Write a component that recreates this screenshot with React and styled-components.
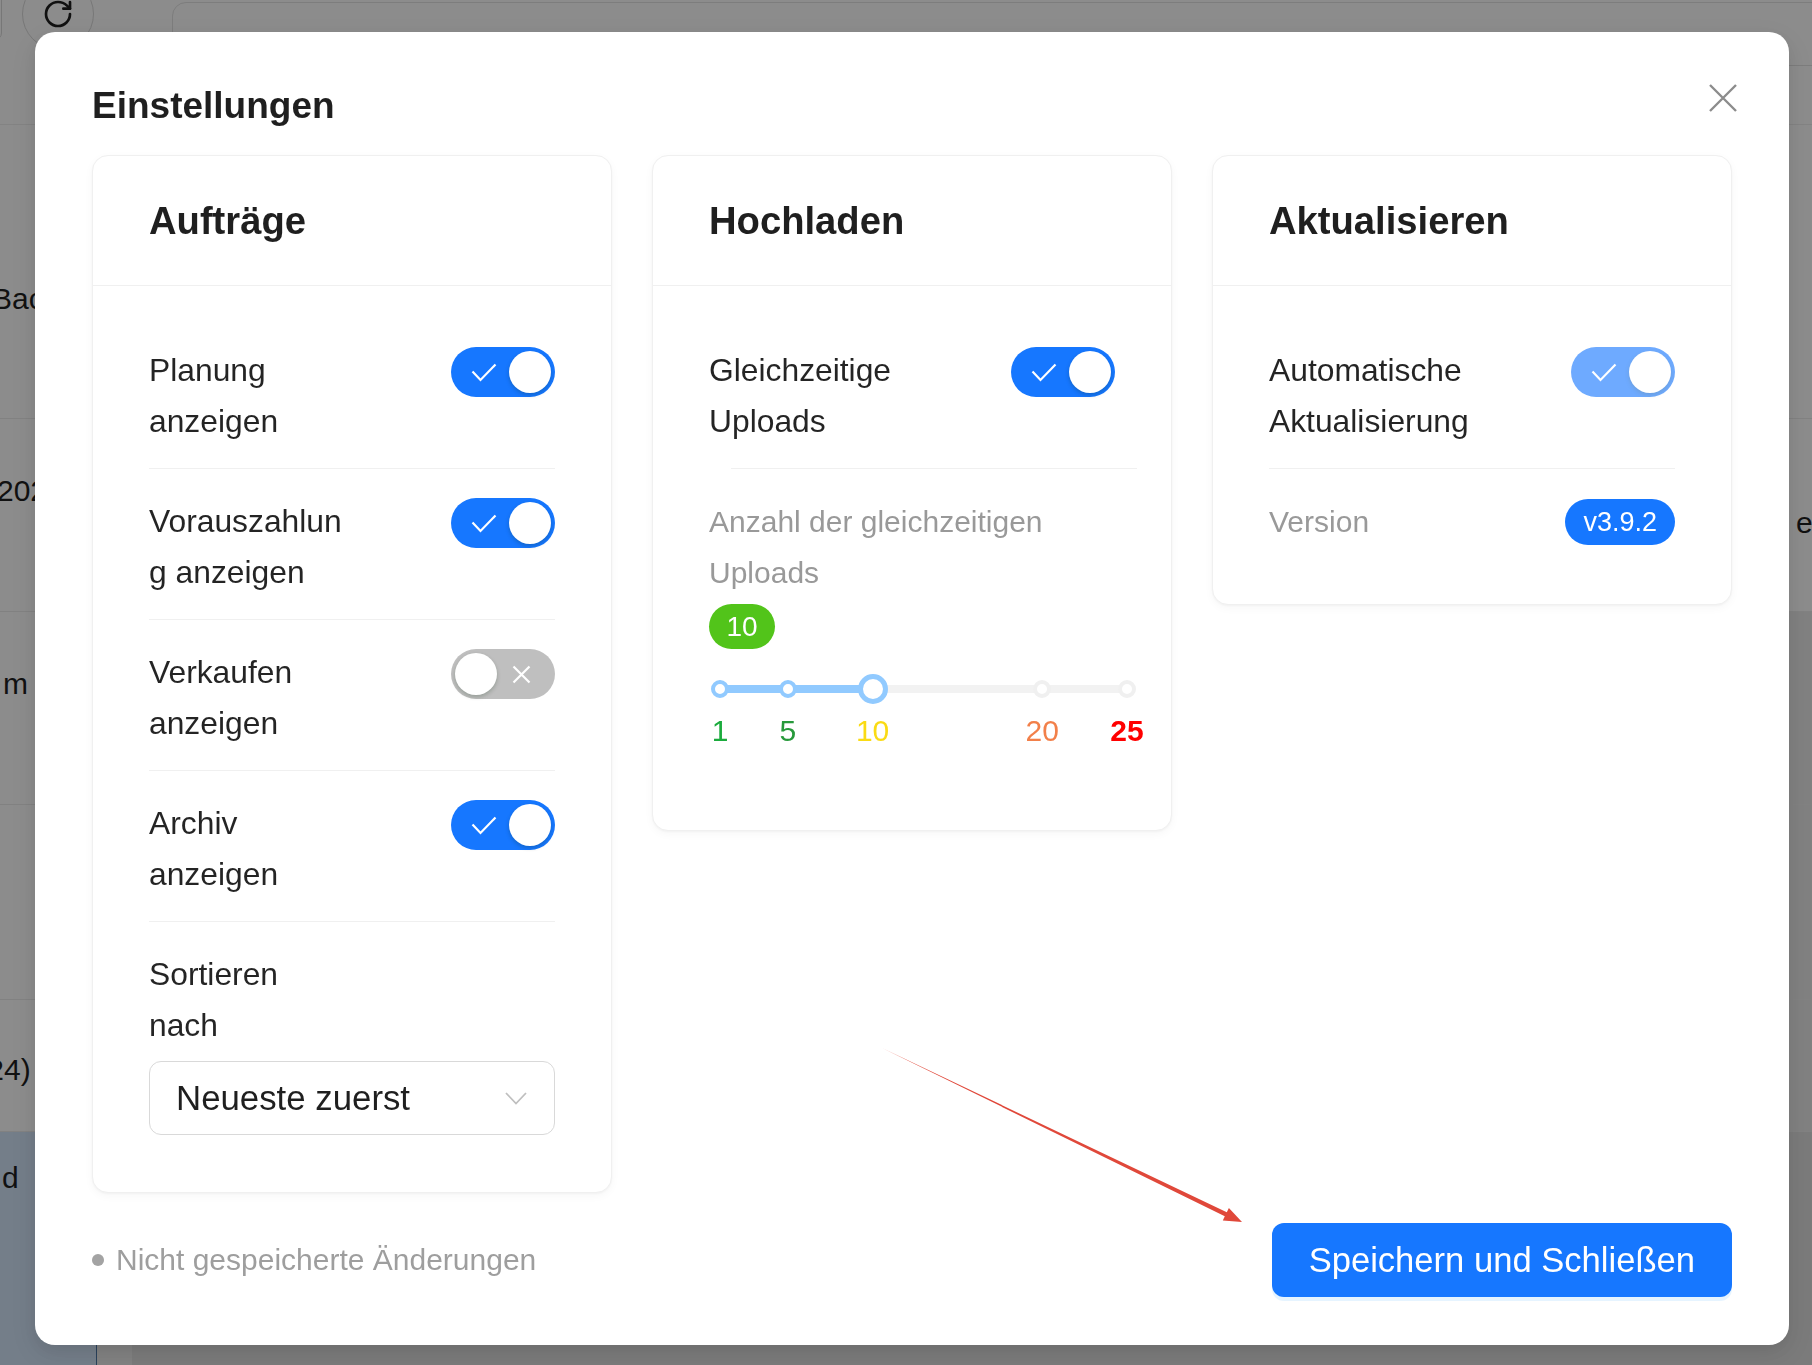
import React from 'react';
import styled, { createGlobalStyle } from 'styled-components';
import { RotateCw } from 'lucide-react';

const GlobalStyle = createGlobalStyle`
  html, body { margin: 0; padding: 0; background: #fff; overflow: hidden; }
  body { font-family: "Open Sans", "Noto Sans", sans-serif; }
  * { box-sizing: border-box; }
`;

/* ---------- background app (dimmed behind the modal) ---------- */
const Page = styled.div`
  position: relative;
  width: 1812px;
  height: 1365px;
  overflow: hidden;
  background: #fff;
  font-family: "Liberation Sans", Arial, sans-serif;
  color: #1f1f1f;
`;

const TopBar = styled.div`
  height: 125px;
  display: flex;
  align-items: flex-start;
  border-bottom: 1px solid #eeeeee;
`;

const EdgeButton = styled.div`
  width: 14px;
  height: 70px;
  margin: -30px 0 0 -12px;
  border: 1px solid #d9d9d9;
  border-radius: 10px;
`;

const CircleButton = styled.div`
  width: 72px;
  height: 72px;
  margin: -22px 0 0 20px;
  border-radius: 50%;
  border: 1px solid #d9d9d9;
  display: flex;
  align-items: center;
  justify-content: center;
  color: #1f1f1f;
`;

const SearchBox = styled.div`
  flex: 1;
  height: 64px;
  margin: 2px -30px 0 78px;
  border: 1px solid #e3e3e3;
  border-radius: 14px;
`;

const BgRow = styled.div`
  display: flex;
  height: ${p => p.$h}px;
  border-bottom: 1px solid #ececec;
  background: ${p => p.$bg || '#fff'};
`;

const BgCell = styled.div`
  width: ${p => (p.$w ? `${p.$w}px` : 'auto')};
  flex: ${p => (p.$w ? 'none' : 1)};
  padding-top: ${p => p.$ty || 0}px;
  background: ${p => p.$bg || 'transparent'};
  border-right: ${p => (p.$line ? `1px solid ${p.$line}` : 'none')};
  overflow: hidden;
  white-space: nowrap;
  font-size: 30px;
  line-height: 36px;
`;

const BgText = styled.span`
  display: inline-block;
  margin-left: ${p => p.$x || 0}px;
`;

/* ---------- modal ---------- */
const Overlay = styled.div`
  position: fixed;
  inset: 0;
  background: rgba(0, 0, 0, 0.45);
  padding: 32px 0 0 35px;
  display: flex;
  align-items: flex-start;
`;

const Modal = styled.div`
  width: 1754px;
  background: #fff;
  border-radius: 20px;
  padding: 48px 57px 48px;
  box-shadow: 0 6px 16px rgba(0, 0, 0, 0.08), 0 9px 28px 8px rgba(0, 0, 0, 0.05);
`;

const Header = styled.div`
  display: flex;
  justify-content: space-between;
  align-items: flex-start;
  margin-bottom: 23px;
`;

const Title = styled.h2`
  margin: 0;
  font-weight: 600;
  font-size: 37px;
  line-height: 52px;
  color: rgba(0, 0, 0, 0.88);
`;

const CloseButton = styled.button`
  width: 30px;
  height: 30px;
  margin: 3px -6px 0 0;
  padding: 0;
  border: 0;
  background: none;
  color: #8c8c8c;
  display: flex;
  cursor: pointer;
`;

const Cards = styled.div`
  display: grid;
  grid-template-columns: repeat(3, 520px);
  gap: 40px;
  align-items: start;
`;

const Card = styled.section`
  background: #fff;
  border: 1px solid #f0f0f0;
  border-radius: 16px;
  box-shadow: 0 1px 2px rgba(0, 0, 0, 0.03), 0 3px 10px rgba(0, 0, 0, 0.035);
`;

const CardHead = styled.div`
  height: 130px;
  padding: 0 56px;
  display: flex;
  align-items: center;
  border-bottom: 1px solid #f0f0f0;
`;

const CardTitle = styled.h3`
  margin: 0;
  font-weight: 600;
  font-size: 38.2px;
  line-height: 52px;
  color: rgba(0, 0, 0, 0.88);
`;

const CardBody = styled.div`
  padding: 32px 56px 36px;
`;

const Row = styled.div`
  display: flex;
  flex-direction: ${p => (p.$stack ? 'column' : 'row')};
  justify-content: space-between;
  align-items: ${p => (p.$stack ? 'stretch' : p.$center ? 'center' : 'flex-start')};
  gap: ${p => (p.$stack ? 10 : 16)}px;
  padding: 27px 0 21px;
  border-bottom: ${p => (p.$divider ? '1px solid #f0f0f0' : 'none')};
`;

const Divider = styled.div`
  height: 1px;
  background: #f0f0f0;
  margin: 0 ${p => -(p.$shift || 0)}px 0 ${p => p.$shift || 0}px;
`;

const Label = styled.div`
  font-size: 31.8px;
  line-height: 51px;
  color: rgba(0, 0, 0, 0.86);
`;

const Hint = styled.div`
  font-family: "Liberation Sans", Arial, sans-serif;
  font-size: 30px;
  line-height: 51px;
  color: #999999;
`;

/* switch */
const SwitchTrack = styled.button`
  position: relative;
  flex-shrink: 0;
  width: 104px;
  height: 50px;
  margin-top: 2px;
  padding: 0;
  border: 0;
  border-radius: 25px;
  background: ${p => (p.$checked ? '#1677ff' : 'rgba(0, 0, 0, 0.25)')};
  opacity: ${p => (p.$disabled ? 0.62 : 1)};
  cursor: pointer;
`;

const Knob = styled.span`
  position: absolute;
  top: 4px;
  left: ${p => (p.$checked ? 58 : 4)}px;
  width: 42px;
  height: 42px;
  border-radius: 50%;
  background: #fff;
  box-shadow: 0 2px 4px rgba(0, 35, 11, 0.22);
`;

const SwitchIcon = styled.span`
  position: absolute;
  top: 0;
  bottom: 0;
  width: 54px;
  ${p => (p.$checked ? 'left: 6px;' : 'right: 7px;')}
  display: flex;
  align-items: center;
  justify-content: center;
  color: #fff;
`;

const Switch = ({ checked, disabled }) => (
  <SwitchTrack $checked={checked} $disabled={disabled} aria-pressed={checked}>
    <SwitchIcon $checked={checked}>
      {checked ? (
        <svg width="26" height="19" viewBox="0 0 26 19" fill="none">
          <polyline points="1.5,8.5 9.5,17 24.5,1.5" stroke="currentColor" strokeWidth="2.2" />
        </svg>
      ) : (
        <svg width="19" height="19" viewBox="0 0 19 19" fill="none">
          <path d="M1.5 1.5 L17.5 17.5 M17.5 1.5 L1.5 17.5" stroke="currentColor" strokeWidth="2.2" />
        </svg>
      )}
    </SwitchIcon>
    <Knob $checked={checked} />
  </SwitchTrack>
);

/* select */
const SelectBox = styled.div`
  height: 74px;
  padding: 0 27px 0 26px;
  border: 1px solid #d9d9d9;
  border-radius: 12px;
  display: flex;
  align-items: center;
  justify-content: space-between;
  font-size: 34.8px;
  color: rgba(0, 0, 0, 0.88);
`;

/* slider */
const SliderSection = styled.div`
  display: flex;
  flex-direction: column;
  align-items: flex-start;
  padding: 27px 0 21px;
`;

const ValueBadge = styled.span`
  margin-top: 6px;
  height: 45px;
  min-width: 66px;
  padding: 0 16px;
  border-radius: 23px;
  background: #52c41a;
  color: #fff;
  font-size: 28px;
  line-height: 45px;
  text-align: center;
`;

const SliderBox = styled.div`
  position: relative;
  align-self: stretch;
  height: 124px;
  margin: 0 -12px 0 11px;
`;

const Rail = styled.div`
  position: absolute;
  left: 0;
  right: 0;
  top: 36px;
  height: 8px;
  border-radius: 4px;
  background: #f2f2f2;
`;

const Track = styled.div`
  position: absolute;
  left: 0;
  top: 36px;
  height: 8px;
  border-radius: 4px;
  background: #91caff;
`;

const MarkDot = styled.span`
  position: absolute;
  top: 31px;
  width: 18px;
  height: 18px;
  margin-left: -9px;
  border-radius: 50%;
  background: #fff;
  border: 4px solid ${p => (p.$active ? '#91caff' : '#f0f0f0')};
`;

const Handle = styled.span`
  position: absolute;
  top: 25px;
  width: 30px;
  height: 30px;
  margin-left: -15px;
  border-radius: 50%;
  background: #fff;
  border: 5px solid #91caff;
`;

const MarkLabel = styled.span`
  position: absolute;
  top: 62px;
  transform: translateX(-50%);
  font-size: 30px;
  line-height: 40px;
  font-weight: ${p => (p.$bold ? 700 : 400)};
  color: ${p => p.$color};
`;

const marks = [
  { v: 1, color: '#1bab3d' },
  { v: 5, color: '#27993b' },
  { v: 10, color: '#fadb14' },
  { v: 20, color: '#f2804a' },
  { v: 25, color: '#ff0000', bold: true },
];

const Slider = ({ value, min, max }) => {
  const pct = v => ((v - min) / (max - min)) * 100;
  return (
    <SliderBox>
      <Rail />
      <Track style={{ width: `${pct(value)}%` }} />
      {marks.map(m => (
        <MarkDot key={`d${m.v}`} $active={m.v <= value} style={{ left: `${pct(m.v)}%` }} />
      ))}
      <Handle style={{ left: `${pct(value)}%` }} />
      {marks.map(m => (
        <MarkLabel key={`l${m.v}`} $color={m.color} $bold={m.bold} style={{ left: `${pct(m.v)}%` }}>
          {m.v}
        </MarkLabel>
      ))}
    </SliderBox>
  );
};

const VersionBadge = styled.span`
  height: 46px;
  padding: 0 18px;
  border-radius: 23px;
  background: #1677ff;
  color: #fff;
  font-family: "Liberation Sans", Arial, sans-serif;
  font-size: 27px;
  line-height: 46px;
`;

/* footer */
const Footer = styled.div`
  margin-top: 30px;
  display: flex;
  justify-content: space-between;
  align-items: center;
`;

const Status = styled.div`
  display: flex;
  align-items: center;
  gap: 12px;
  font-family: "Liberation Sans", Arial, sans-serif;
  font-size: 30px;
  line-height: 40px;
  color: #9e9e9e;
`;

const StatusDot = styled.span`
  width: 12px;
  height: 12px;
  border-radius: 50%;
  background: #a3a3a3;
`;

const PrimaryButton = styled.button`
  height: 74px;
  padding: 0 37px;
  border: 0;
  border-radius: 12px;
  background: #1677ff;
  color: #fff;
  font-family: "Liberation Sans", Arial, sans-serif;
  font-size: 34.6px;
  box-shadow: 0 4px 0 rgba(5, 145, 255, 0.1);
  cursor: pointer;
`;

const ArrowMark = styled.svg`
  position: absolute;
  left: 870px;
  top: 1040px;
  pointer-events: none;
`;

const bgRows = [
  { h: 294, text: 'Backup', x: -8, ty: 156 },
  { h: 193, text: '2024-05', x: -3, ty: 54, right: 'erledigt', rty: 86 },
  { h: 193, text: 'm  Lager', x: 3, ty: 54, rightBg: '#ebebeb' },
  { h: 195, text: '', rightBg: '#ebebeb' },
  { h: 132, text: '(2024)', x: -56, ty: 52, rightBg: '#ebebeb' },
  { h: 240, text: 'd', x: 2, ty: 28, selected: true },
];

export default function App() {
  return (
    <>
      <GlobalStyle />
      <Page>
        <TopBar>
          <EdgeButton />
          <CircleButton>
            <RotateCw size={32} strokeWidth={2} />
          </CircleButton>
          <SearchBox />
        </TopBar>
        {bgRows.map((r, i) => (
          <BgRow key={i} $h={r.h} $bg={r.selected ? '#e0e0e0' : '#fff'}>
            <BgCell $w={97} $ty={r.ty} $bg={r.selected ? '#d3e5fa' : 'transparent'} $line={r.selected ? '#4d77a6' : null}>
              <BgText $x={r.x}>{r.text}</BgText>
            </BgCell>
            <BgCell $w={35} $bg={r.selected ? '#ececec' : 'transparent'} />
            <BgCell />
            <BgCell $w={23} $ty={r.rty} $bg={r.rightBg}>
              {r.right && <BgText $x={7}>{r.right}</BgText>}
            </BgCell>
          </BgRow>
        ))}

        <Overlay>
          <Modal role="dialog">
            <Header>
              <Title>Einstellungen</Title>
              <CloseButton aria-label="Schließen">
                <svg width="30" height="30" viewBox="0 0 30 30" fill="none">
                  <path d="M2 2 L28 28 M28 2 L2 28" stroke="currentColor" strokeWidth="2.4" />
                </svg>
              </CloseButton>
            </Header>

            <Cards>
              <Card>
                <CardHead>
                  <CardTitle>Aufträge</CardTitle>
                </CardHead>
                <CardBody>
                  <Row $divider>
                    <Label>Planung<br />anzeigen</Label>
                    <Switch checked />
                  </Row>
                  <Row $divider>
                    <Label>Vorauszahlun<br />g anzeigen</Label>
                    <Switch checked />
                  </Row>
                  <Row $divider>
                    <Label>Verkaufen<br />anzeigen</Label>
                    <Switch checked={false} />
                  </Row>
                  <Row $divider>
                    <Label>Archiv<br />anzeigen</Label>
                    <Switch checked />
                  </Row>
                  <Row $stack>
                    <Label>Sortieren<br />nach</Label>
                    <SelectBox>
                      <span>Neueste zuerst</span>
                      <svg width="22" height="13" viewBox="0 0 22 13" fill="none">
                        <polyline points="1,1 11,11.5 21,1" stroke="#bfbfbf" strokeWidth="1.8" />
                      </svg>
                    </SelectBox>
                  </Row>
                </CardBody>
              </Card>

              <Card>
                <CardHead>
                  <CardTitle>Hochladen</CardTitle>
                </CardHead>
                <CardBody>
                  <Row>
                    <Label>Gleichzeitige<br />Uploads</Label>
                    <Switch checked />
                  </Row>
                  <Divider $shift={22} />
                  <SliderSection>
                    <Hint>Anzahl der gleichzeitigen Uploads</Hint>
                    <ValueBadge>10</ValueBadge>
                    <Slider value={10} min={1} max={25} />
                  </SliderSection>
                </CardBody>
              </Card>

              <Card>
                <CardHead>
                  <CardTitle>Aktualisieren</CardTitle>
                </CardHead>
                <CardBody>
                  <Row $divider>
                    <Label>Automatische<br />Aktualisierung</Label>
                    <Switch checked disabled />
                  </Row>
                  <Row $center>
                    <Hint>Version</Hint>
                    <VersionBadge>v3.9.2</VersionBadge>
                  </Row>
                </CardBody>
              </Card>
            </Cards>

            <Footer>
              <Status>
                <StatusDot />
                <span>Nicht gespeicherte Änderungen</span>
              </Status>
              <PrimaryButton>Speichern und Schließen</PrimaryButton>
            </Footer>
          </Modal>

          <ArrowMark width="390" height="200" viewBox="0 0 390 200">
            <polygon
              points="12,8 356.8,172.2 358.9,167.9 372,182 352.8,180.5 354.8,176.2"
              fill="#e0483a"
            />
          </ArrowMark>
        </Overlay>
      </Page>
    </>
  );
}
